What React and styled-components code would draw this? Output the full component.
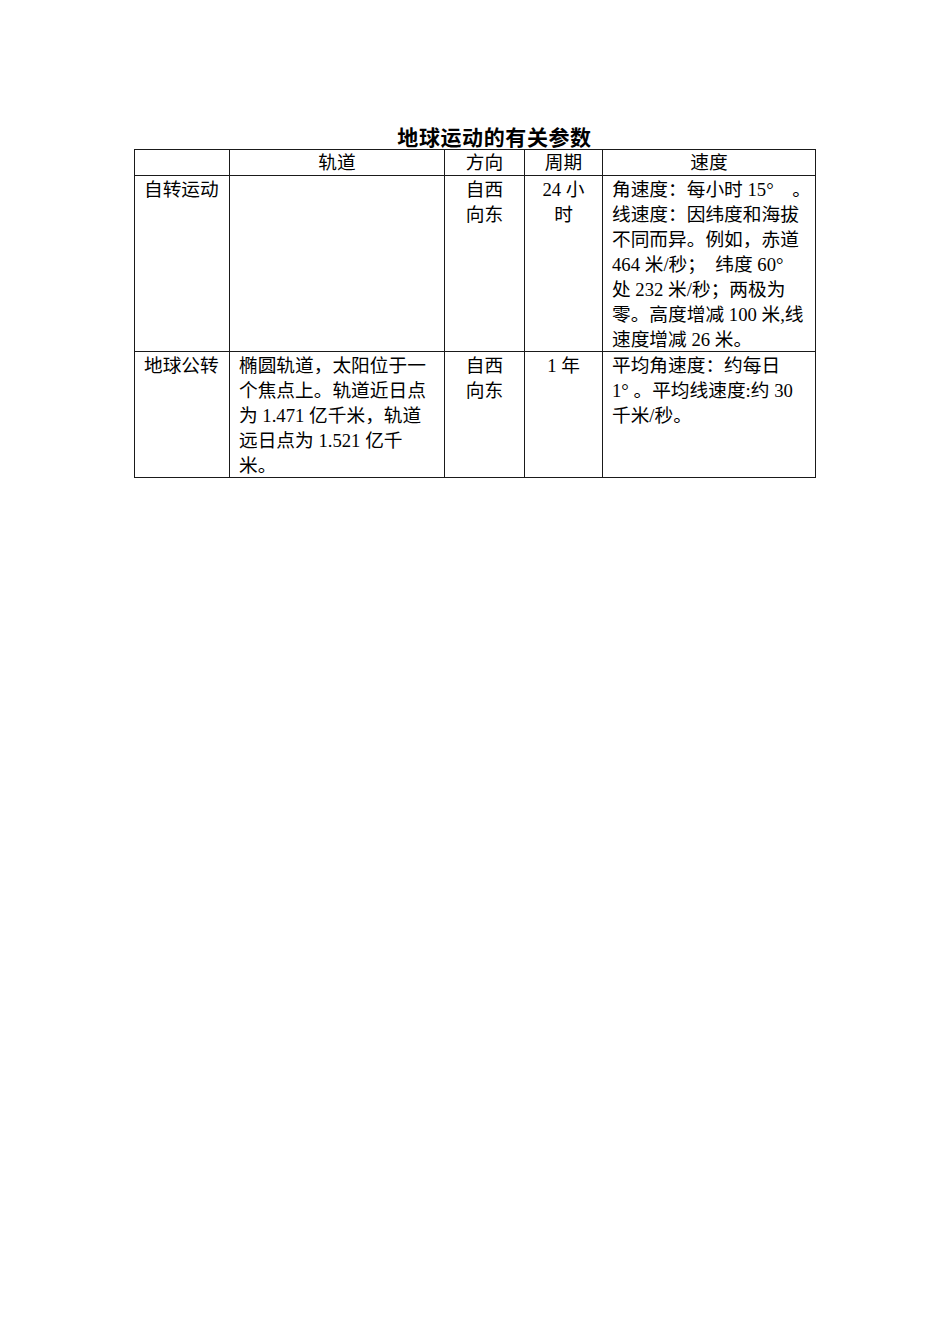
import React from "react";
import styled, { createGlobalStyle } from "styled-components";

const GlobalStyle = createGlobalStyle`
  html, body {
    margin: 0;
    padding: 0;
    background: #fff;
  }
  body {
    font-family: "Liberation Serif", "Noto Sans CJK SC", serif;
    color: #000;
  }
`;

const Page = styled.div`
  width: 950px;
  min-height: 1344px;
  box-sizing: border-box;
  padding: 124px 0 0 134px;
`;

const Title = styled.h1`
  width: 681px;
  margin: 0;
  padding-left: 40px;
  box-sizing: border-box;
  text-align: center;
  font-family: "Noto Sans CJK SC", sans-serif;
  font-size: 21px;
  font-weight: 700;
  line-height: 25px;
  letter-spacing: 0.6px;
`;

const Sheet = styled.table`
  width: 681px;
  border-collapse: collapse;
  table-layout: fixed;
  font-size: 18.7px;
  line-height: 25px;
`;

const HeadCell = styled.th`
  border: 1px solid #1a1a1a;
  padding: 0;
  height: 24px;
  font-weight: 400;
  text-align: center;
  vertical-align: middle;
  white-space: nowrap;
  line-height: 25px;
`;

const Cell = styled.td`
  border: 1px solid #1a1a1a;
  padding: 0 ${(p) => (p.$center ? "0" : "9px")};
  text-align: ${(p) => (p.$center ? "center" : "left")};
  vertical-align: top;
  height: ${(p) => p.$h}px;
`;

const Line = styled.span`
  display: block;
  white-space: pre;
  position: relative;
  top: 1px;
`;

const columns = [95, 215, 80, 78, 213];
const heads = ["", "轨道", "方向", "周期", "速度"];

const rows = [
  {
    h: 175,
    cells: [
      ["自转运动"],
      [],
      ["自西", "向东"],
      ["24 小", "时"],
      [
        "角速度：每小时 15°　。",
        "线速度：因纬度和海拔",
        "不同而异。例如，赤道",
        "464 米/秒；　纬度 60°",
        "处 232 米/秒；两极为",
        "零。高度增减 100 米,线",
        "速度增减 26 米。",
      ],
    ],
  },
  {
    h: 124,
    cells: [
      ["地球公转"],
      [
        "椭圆轨道，太阳位于一",
        "个焦点上。轨道近日点",
        "为 1.471 亿千米，轨道",
        "远日点为 1.521 亿千",
        "米。",
      ],
      ["自西", "向东"],
      ["1 年"],
      ["平均角速度：约每日", "1° 。平均线速度:约 30", "千米/秒。"],
    ],
  },
];

const centered = [false, false, true, true, false];

export default function App() {
  return (
    <>
      <GlobalStyle />
      <Page>
        <Title>地球运动的有关参数</Title>
        <Sheet>
          <colgroup>
            {columns.map((w, i) => (
              <col key={i} style={{ width: w }} />
            ))}
          </colgroup>
          <thead>
            <tr>
              {heads.map((h, i) => (
                <HeadCell key={i}>{h}</HeadCell>
              ))}
            </tr>
          </thead>
          <tbody>
            {rows.map((row, r) => (
              <tr key={r}>
                {row.cells.map((lines, c) => (
                  <Cell key={c} $h={row.h} $center={centered[c]}>
                    {lines.map((l, k) => (
                      <Line key={k}>{l}</Line>
                    ))}
                  </Cell>
                ))}
              </tr>
            ))}
          </tbody>
        </Sheet>
      </Page>
    </>
  );
}
